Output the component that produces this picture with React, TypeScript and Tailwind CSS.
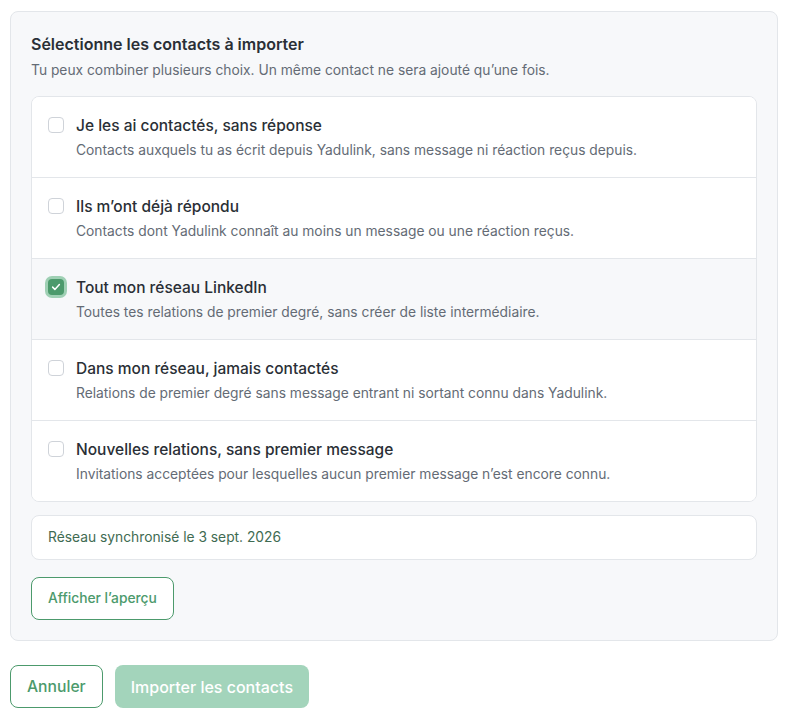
import { useState } from "react";

const options = [
  {
    id: "no-reply",
    title: "Je les ai contactés, sans réponse",
    desc: "Contacts auxquels tu as écrit depuis Yadulink, sans message ni réaction reçus depuis.",
  },
  {
    id: "replied",
    title: "Ils m’ont déjà répondu",
    desc: "Contacts dont Yadulink connaît au moins un message ou une réaction reçus.",
  },
  {
    id: "network",
    title: "Tout mon réseau LinkedIn",
    desc: "Toutes tes relations de premier degré, sans créer de liste intermédiaire.",
  },
  {
    id: "never",
    title: "Dans mon réseau, jamais contactés",
    desc: "Relations de premier degré sans message entrant ni sortant connu dans Yadulink.",
  },
  {
    id: "new",
    title: "Nouvelles relations, sans premier message",
    desc: "Invitations acceptées pour lesquelles aucun premier message n’est encore connu.",
  },
];

function Checkbox({ checked }: { checked: boolean }) {
  if (checked) {
    return (
      <span className="flex h-4 w-4 shrink-0 items-center justify-center rounded-[4px] bg-[#4c9a6c] ring-[3px] ring-[#9fd0b4]">
        <svg viewBox="0 0 16 16" className="h-3 w-3" fill="none">
          <path
            d="M3.5 8.2l3 3 6-6.4"
            stroke="white"
            strokeWidth="2"
            strokeLinecap="round"
            strokeLinejoin="round"
          />
        </svg>
      </span>
    );
  }
  return (
    <span className="block h-4 w-4 shrink-0 rounded-[4px] border border-[#cfd3d9] bg-white" />
  );
}

export default function App() {
  const [selected, setSelected] = useState<string[]>(["network"]);

  const toggle = (id: string) =>
    setSelected((s) => (s.includes(id) ? s.filter((x) => x !== id) : [...s, id]));

  return (
    <div className="min-h-screen bg-white px-[10px] pt-[11px] font-['Inter',sans-serif] text-[#1f2329]">
      <section className="rounded-lg border border-[#e3e6ea] bg-[#f7f8fa] px-5 pb-5 pt-[22px]">
        <h2 className="text-[16px] font-semibold leading-5 text-[#2a2f36]">
          Sélectionne les contacts à importer
        </h2>
        <p className="mt-[6px] text-[13.8px] leading-5 text-[#646b75]">
          Tu peux combiner plusieurs choix. Un même contact ne sera ajouté qu’une fois.
        </p>

        <div className="mt-4 overflow-hidden rounded-lg border border-[#e3e6ea] bg-white">
          {options.map((o, i) => {
            const on = selected.includes(o.id);
            return (
              <div
                key={o.id}
                onClick={() => toggle(o.id)}
                className={`flex cursor-pointer gap-3 px-4 pt-[19px] ${
                  i > 0 ? "h-[81px] border-t border-[#e3e6ea]" : "h-[80px]"
                } ${on ? "bg-[#f7f8fa]" : "bg-white"}`}
              >
                <span className="block pt-[1px]">
                  <Checkbox checked={on} />
                </span>
                <span className="flex flex-col">
                  <span className="text-[15.5px] font-medium leading-5 text-[#2a2f36]">
                    {o.title}
                  </span>
                  <span className="mt-[4px] text-[13.8px] leading-5 text-[#646b75]">
                    {o.desc}
                  </span>
                </span>
              </div>
            );
          })}
        </div>

        <div className="mt-[13px] flex h-[45px] items-center rounded-lg border border-[#e3e6ea] bg-white px-4 text-[13.8px] text-[#3f6b52]">
          Réseau synchronisé le 3 sept. 2026
        </div>

        <button className="mt-[17px] h-[43px] rounded-lg border border-[#4c9a6c] bg-white px-4 text-[13.8px] font-medium text-[#4c9a6c]">
          Afficher l’aperçu
        </button>
      </section>

      <div className="mt-6 flex gap-3">
        <button className="h-[43px] rounded-lg border border-[#4c9a6c] bg-white px-4 text-[15.7px] font-medium text-[#4c9a6c]">
          Annuler
        </button>
        <button
          disabled
          className="h-[43px] rounded-lg bg-[#a3d4bb] px-4 text-[16px] font-medium text-white"
        >
          Importer les contacts
        </button>
      </div>
    </div>
  );
}
